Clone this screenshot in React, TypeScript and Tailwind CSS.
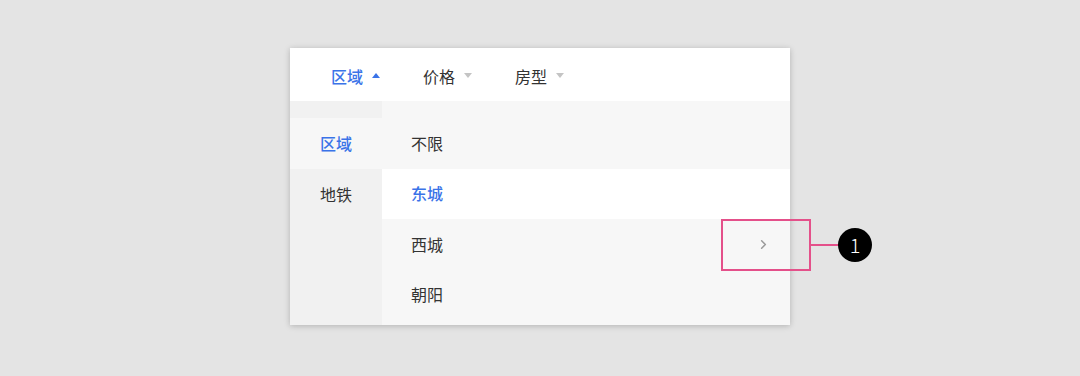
import { ChevronRight } from 'lucide-react';

const tabs = [
  { label: '区域', active: true },
  { label: '价格', active: false },
  { label: '房型', active: false },
];

const sideItems = [
  { label: '区域', active: true },
  { label: '地铁', active: false },
];

// row heights alternate 51/50 to follow the ~50.6px rhythm of the design
const options = [
  { label: '不限', active: false, arrow: false, h: 'h-[51px]' },
  { label: '东城', active: true, arrow: false, h: 'h-[50px]' },
  { label: '西城', active: false, arrow: true, h: 'h-[51px]' },
  { label: '朝阳', active: false, arrow: false, h: 'h-[50px]' },
];

function Caret({ up, active }: { up: boolean; active: boolean }) {
  return (
    <svg width="8" height="5" viewBox="0 0 8 5" className="ml-[9px]">
      <path
        d={up ? 'M0 5 L4 0 L8 5 Z' : 'M0 0 L8 0 L4 5 Z'}
        fill={active ? '#3a73e8' : '#c4c4c4'}
      />
    </svg>
  );
}

export default function App() {
  return (
    <div
      className="w-[1080px] h-[376px] bg-[#e4e4e4] pt-[48px] pl-[290px]"
      style={{ fontFamily: '"Noto Sans CJK SC", "Noto Sans", sans-serif' }}
    >
      <div className="relative w-[500px] h-[277px] bg-white shadow-[0_1px_6px_rgba(0,0,0,0.22)] flex flex-col">
        {/* Tab bar */}
        <div className="h-[53px] pt-[2px] flex items-center pl-[41px] gap-[42px] shrink-0">
          {tabs.map((t) => (
            <div key={t.label} className="flex items-center w-[50px]">
              <span
                className={`text-[16px] leading-none ${
                  t.active ? 'text-[#3a73e8] font-medium' : 'text-[#333]'
                }`}
              >
                {t.label}
              </span>
              <Caret up={t.active} active={t.active} />
            </div>
          ))}
        </div>

        {/* Panels */}
        <div className="flex flex-1">
          <div className="w-[92px] bg-[#f1f1f1] pt-[17px]">
            {sideItems.map((s) => (
              <div
                key={s.label}
                className={`h-[51px] pb-[2px] flex items-center justify-center text-[16px] ${
                  s.active ? 'bg-[#f7f7f7] text-[#3a73e8] font-medium' : 'text-[#333]'
                }`}
              >
                {s.label}
              </div>
            ))}
          </div>
          <div className="flex-1 bg-[#f7f7f7] pt-[17px]">
            {options.map((o) => (
              <div
                key={o.label}
                className={`${o.h} pb-[2px] flex items-center justify-between pl-[29px] pr-[19px] text-[16px] ${
                  o.active ? 'bg-white text-[#3a73e8] font-medium' : 'text-[#333]'
                }`}
              >
                <span>{o.label}</span>
                {o.arrow && <ChevronRight size={15} strokeWidth={2.4} className="text-[#9a9a9a] mt-[2px]" />}
              </div>
            ))}
          </div>
        </div>

        {/* Annotation overlay */}
        <div className="absolute left-[431px] top-[171px] w-[90px] h-[52px] border-2 border-[#e4508a]" />
        <div className="absolute left-[521px] top-[196px] w-[28px] h-[2px] bg-[#e4508a]" />
        <div className="absolute left-[548px] top-[180px] w-[34px] h-[34px] rounded-full bg-black flex items-center justify-center text-white text-[20px] font-light leading-none">
          1
        </div>
      </div>
    </div>
  );
}
